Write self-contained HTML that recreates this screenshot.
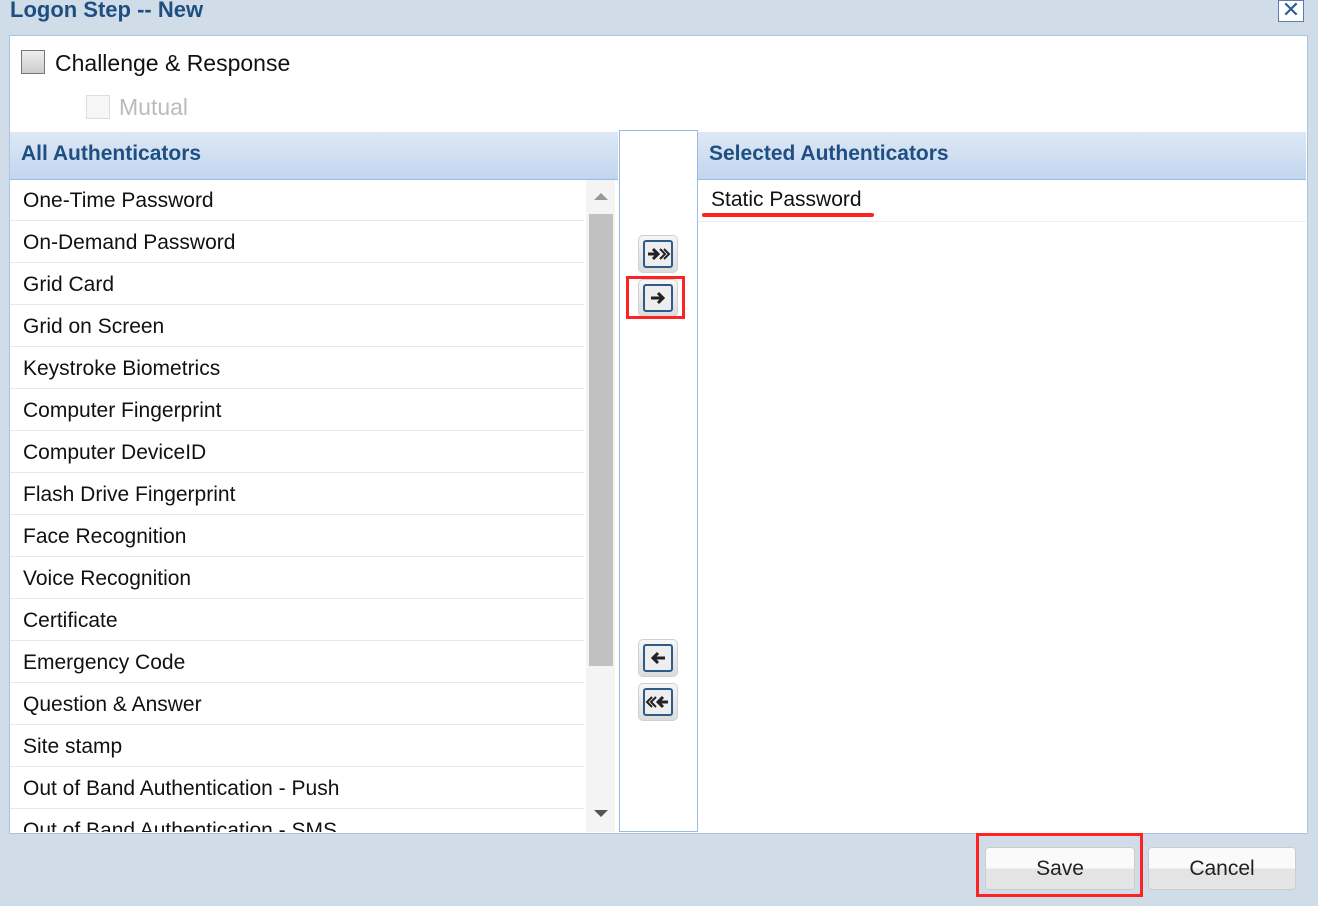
<!DOCTYPE html><html><head><style>
body{margin:0;width:1318px;height:906px;background:#d0dce8;font-family:"Liberation Sans",sans-serif;position:relative;overflow:hidden}
.a{position:absolute}
.t{font-size:21px;color:#111}
.row{position:absolute;left:10px;width:574px;height:41px;border-bottom:1px solid #e8e8e8;font-size:21px;color:#111;line-height:41px;padding-left:13px;box-sizing:border-box}
.btn{position:absolute;width:38px;height:36px;border:1px solid #d0d0d0;border-radius:5px;background:linear-gradient(#f6f6f6,#dcdcdc)}
.btn svg{position:absolute;left:4px;top:4px}
.hd{font-weight:bold;color:#1f4f82;font-size:21px}
</style></head><body>
<div class="a hd" style="left:10px;top:-3px;font-size:22px">Logon Step -- New</div>
<div class="a" style="left:1278px;top:0;width:24px;height:20px;border:1px solid #5a7fae;background:#fff;color:#2d5c9c;font-size:22px;line-height:18px;text-align:center">✕</div>
<div class="a" style="left:9px;top:35px;width:1297px;height:797px;background:#fff;border:1px solid #a9c4e4"></div>
<div class="a" style="left:21px;top:50px;width:22px;height:22px;border:1px solid #777;background:linear-gradient(#eee,#ccc)"></div>
<div class="a t" style="left:55px;top:50px;font-size:23px">Challenge &amp; Response</div>
<div class="a" style="left:86px;top:95px;width:22px;height:22px;border:1px solid #ddd;background:#f6f6f6"></div>
<div class="a t" style="left:119px;top:94px;font-size:23px;color:#bbb">Mutual</div>
<div class="a" style="left:10px;top:132px;width:608px;height:47px;background:linear-gradient(#dde8f5,#c3d6ee);border-bottom:1px solid #99bbe8"></div>
<div class="a hd" style="left:21px;top:142px">All Authenticators</div>
<div class="a" style="left:698px;top:132px;width:608px;height:47px;background:linear-gradient(#dde8f5,#c3d6ee);border-bottom:1px solid #99bbe8"></div>
<div class="a hd" style="left:709px;top:142px">Selected Authenticators</div>
<div class="a" style="left:619px;top:130px;width:77px;height:700px;background:#fff;border:1px solid #99bbe8"></div>
<div class="a" style="left:698px;top:180px;width:608px;height:41px;border-bottom:1px solid #eee"></div>
<div class="a t" style="left:711px;top:188px">Static Password</div>
<div class="a" style="left:702px;top:213px;width:172px;height:4px;background:#f22;border-radius:2px"></div>
<div class="a" style="left:10px;top:180px;width:608px;height:652px;overflow:hidden">
<div style="position:relative;left:-10px;top:-180px">
<div class="row" style="top:180px">One-Time Password</div>
<div class="row" style="top:222px">On-Demand Password</div>
<div class="row" style="top:264px">Grid Card</div>
<div class="row" style="top:306px">Grid on Screen</div>
<div class="row" style="top:348px">Keystroke Biometrics</div>
<div class="row" style="top:390px">Computer Fingerprint</div>
<div class="row" style="top:432px">Computer DeviceID</div>
<div class="row" style="top:474px">Flash Drive Fingerprint</div>
<div class="row" style="top:516px">Face Recognition</div>
<div class="row" style="top:558px">Voice Recognition</div>
<div class="row" style="top:600px">Certificate</div>
<div class="row" style="top:642px">Emergency Code</div>
<div class="row" style="top:684px">Question &amp; Answer</div>
<div class="row" style="top:726px">Site stamp</div>
<div class="row" style="top:768px">Out of Band Authentication - Push</div>
<div class="row" style="top:810px">Out of Band Authentication - SMS</div>
</div></div>
<div class="a" style="left:586px;top:180px;width:29px;height:652px;background:#f4f4f4"></div>
<div class="a" style="left:594px;top:193px;border:7px solid transparent;border-bottom-color:#999;border-top:0"></div>
<div class="a" style="left:589px;top:214px;width:24px;height:452px;background:#c1c1c1"></div>
<div class="a" style="left:594px;top:810px;border:7px solid transparent;border-top-color:#555;border-bottom:0"></div>
<div class="btn" style="left:638px;top:235px"><svg width="30" height="28"><rect x="1" y="1" width="28" height="26" rx="2" fill="#eee" stroke="#2d5c8c" stroke-width="2"/><path d="M5 14h8M10 9l5 5-5 5" stroke="#222" stroke-width="3" fill="none"/><path d="M17 9l5 5-5 5M21 9l5 5-5 5" stroke="#222" stroke-width="2" fill="none"/></svg></div>
<div class="btn" style="left:638px;top:279px"><svg width="30" height="28"><rect x="1" y="1" width="28" height="26" rx="2" fill="#eee" stroke="#2d5c8c" stroke-width="2"/><path d="M8 14h12M15 9l5 5-5 5" stroke="#222" stroke-width="3" fill="none"/></svg></div>
<div class="a" style="left:626px;top:276px;width:53px;height:37px;border:3px solid #f22"></div>
<div class="btn" style="left:638px;top:639px"><svg width="30" height="28"><rect x="1" y="1" width="28" height="26" rx="2" fill="#eee" stroke="#2d5c8c" stroke-width="2"/><path d="M22 14h-12M15 9l-5 5 5 5" stroke="#222" stroke-width="3" fill="none"/></svg></div>
<div class="btn" style="left:638px;top:683px"><svg width="30" height="28"><rect x="1" y="1" width="28" height="26" rx="2" fill="#eee" stroke="#2d5c8c" stroke-width="2"/><path d="M25 14h-8M20 9l-5 5 5 5" stroke="#222" stroke-width="3" fill="none"/><path d="M13 9l-5 5 5 5M9 9l-5 5 5 5" stroke="#222" stroke-width="2" fill="none"/></svg></div>
<div class="a" style="left:985px;top:847px;width:148px;height:41px;border:1px solid #ccc;border-radius:4px;background:linear-gradient(#fafafa 50%,#e4e4e4 50%);font-size:21px;text-align:center;line-height:41px;color:#222">Save</div>
<div class="a" style="left:1148px;top:847px;width:146px;height:41px;border:1px solid #ccc;border-radius:4px;background:linear-gradient(#fafafa 50%,#e4e4e4 50%);font-size:21px;text-align:center;line-height:41px;color:#222">Cancel</div>
<div class="a" style="left:976px;top:833px;width:161px;height:58px;border:3px solid #f22"></div>
</body></html>
